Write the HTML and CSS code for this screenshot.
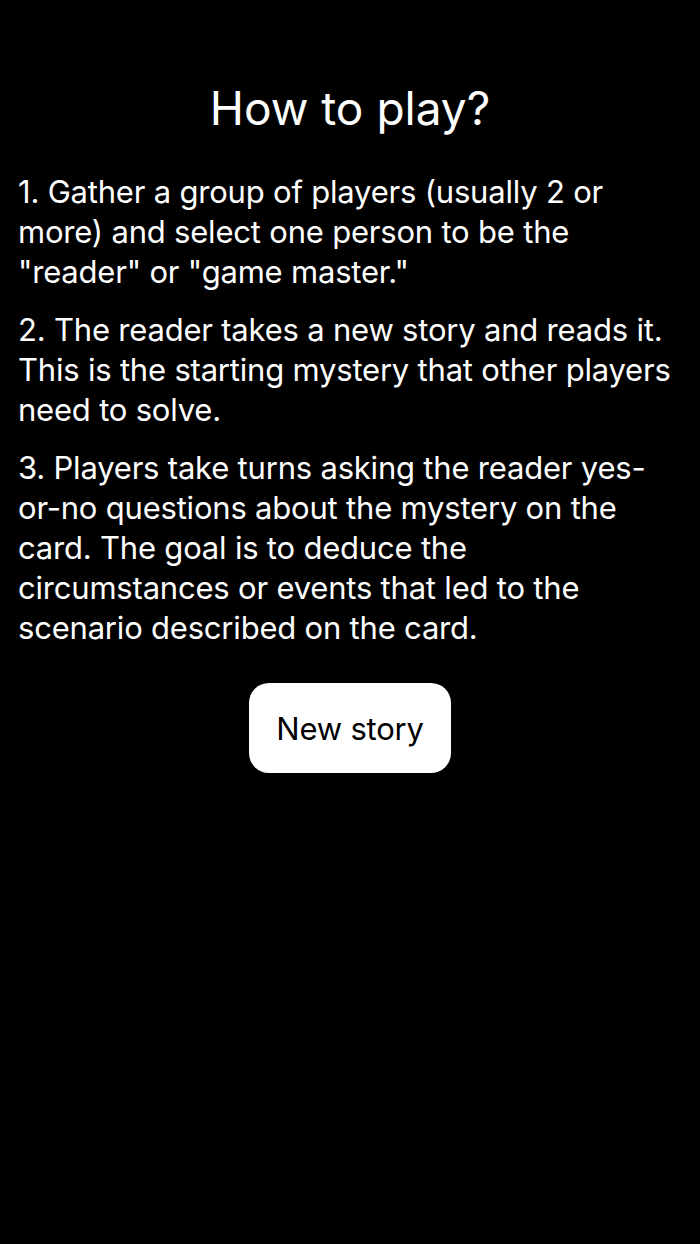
FILE: index.html
```html
<!DOCTYPE html>
<html lang="en">
<head>
    <meta charset="UTF-8">
    <meta name="viewport" content="width=device-width, initial-scale=1.0">
    <title>How to play</title>
    <link rel="stylesheet" href="styles.css">
</head>
<body>
    <div id="container-regras">
        <h1 id="titulo">How to play?</h1>
        <p class="regra">1. Gather a group of players (usually 2 or more) and select one person to be the "reader" or "game master."</p>
        <p class="regra">2. The reader takes a new story and reads it. This is the starting mystery that other players need to solve.</p>
        <p class="regra">3. Players take turns asking the reader yes-or-no questions about the mystery on the card. The goal is to deduce the circumstances or events that led to the scenario described on the card.</p>
        <div class="container-btn">
            <button class="btn">New story</button>
        </div>
    </div>
</body>
</html>
```

FILE: styles.css
```css
*{
  margin: 0;
  padding: 0;
  box-sizing: border-box;
}

body{
  min-height: 100vh;
  background-color: #000;
  color: #fff;
  font-family: Inter, 'Noto Sans', sans-serif;
}

#container-regras{
  padding: 80px 18px 0 18px;
}

#titulo{
  font-size: 46px;
  font-weight: 400;
  text-align: center;
  line-height: 56px;
  margin-bottom: 36px;
}

.regra{
  font-size: 31px;
  line-height: 40px;
  letter-spacing: -0.2px;
  margin-bottom: 18px;
}

.container-btn{
  display: flex;
  justify-content: center;
  padding-top: 17px;
}

.btn{
  border: none;
  border-radius: 20px;
  width: 202px;
  height: 90px;
  background-color: #fff;
  color: #000;
  font-family: inherit;
  font-size: 31px;
  letter-spacing: -0.2px;
  cursor: pointer;
}
```
